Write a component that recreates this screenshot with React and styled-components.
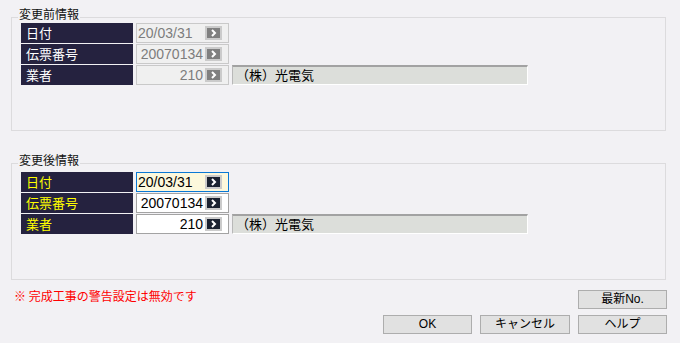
import styled, { createGlobalStyle } from "styled-components";

const Global = createGlobalStyle`
  html, body {
    margin: 0;
    background: #f2f1f4;
  }
  body {
    font-family: "Liberation Sans", "Noto Sans CJK JP", sans-serif;
  }
`;

const Page = styled.div`
  width: 680px;
  height: 343px;
  box-sizing: border-box;
  padding: 17px 14px 0 11px;
  display: flex;
  flex-direction: column;
`;

const Group = styled.div`
  box-sizing: border-box;
  height: ${(p) => p.$h}px;
  margin-bottom: ${(p) => p.$mb || 0}px;
  border: 1px solid #dcdbdd;
  display: flex;
  flex-direction: column;
  align-items: flex-start;
`;

const Title = styled.div`
  margin: -11px 0 0 6px;
  padding: 0 1px;
  background: #f2f1f4;
  font-family: "Noto Sans CJK JP", sans-serif;
  font-size: 12px;
  line-height: 14px;
  color: #111;
`;

const Rows = styled.div`
  margin: ${(p) => p.$top}px 0 0 9px;
  display: flex;
  flex-direction: column;
  gap: 1px;
`;

const Row = styled.div`
  display: flex;
  gap: 3px;
  height: 20px;
`;

const Label = styled.div`
  width: 112px;
  box-sizing: border-box;
  padding-left: 5px;
  background: #25223f;
  color: ${(p) => (p.$on ? "#ffff00" : "#ffffff")};
  font-family: "Noto Sans CJK JP", sans-serif;
  font-size: 13px;
  line-height: 20px;
`;

const fieldBorder = { off: "#c9c9c9", on: "#a3a3a3", focus: "#0a78d4" };
const fieldBg = { off: "#f0f0f0", on: "#ffffff", focus: "#fcf8dc" };

const Field = styled.div`
  width: 93px;
  box-sizing: border-box;
  border: 1px solid ${(p) => fieldBorder[p.$state]};
  background: ${(p) => fieldBg[p.$state]};
  display: flex;
  align-items: center;
  padding: 0 6px 0 1px;
`;

const Value = styled.span`
  flex: 1;
  text-align: ${(p) => (p.$left ? "left" : "right")};
  padding-right: 2px;
  font-size: 14px;
  line-height: 18px;
  color: ${(p) => (p.$state === "off" ? "#7d7d7d" : "#000")};
`;

const Pick = styled.span`
  width: 17px;
  height: 14px;
  box-sizing: border-box;
  border: 2px solid #cbcbcb;
  background: ${(p) => (p.$dark ? "#1b2231" : "#808080")};
  display: flex;
  align-items: center;
  justify-content: center;
`;

const Company = styled.div`
  width: 296px;
  box-sizing: border-box;
  height: 20px;
  border-top: 2px solid #a2a2a2;
  border-left: 1px solid #b8b8b8;
  border-right: 1px solid #ffffff;
  border-bottom: 1px solid #ffffff;
  background: #dcdeda;
  padding-left: 3px;
  font-family: "Noto Sans CJK JP", sans-serif;
  font-size: 13px;
  line-height: 16px;
  color: #000;
`;

const Footer = styled.div`
  display: flex;
  flex-direction: column;
  margin-right: -1px;
`;

const TopLine = styled.div`
  display: flex;
  justify-content: space-between;
  align-items: flex-start;
  margin-top: 10px;
`;

const Note = styled.div`
  margin: -1px 0 0 3px;
  font-family: "Noto Sans CJK JP", sans-serif;
  font-size: 12px;
  line-height: 14px;
  color: #ff0000;
`;

const Buttons = styled.div`
  display: flex;
  justify-content: flex-end;
  gap: 8px;
  margin-top: 6px;
`;

const Button = styled.button`
  width: ${(p) => p.$w || 89}px;
  height: 19px;
  box-sizing: border-box;
  border: 1px solid #adadad;
  background: #e1e1e1;
  padding: 0;
  font-family: "Liberation Sans", "Noto Sans CJK JP", sans-serif;
  font-size: 12px;
  line-height: 17px;
  color: #000;
`;

const Chevron = () => (
  <svg width="7" height="8" viewBox="0 0 7 8">
    <path d="M2 1 L5 4 L2 7" stroke="#fff" strokeWidth="2" fill="none" />
  </svg>
);

const FieldRow = ({ label, value, left, state, on, company }) => (
  <Row>
    <Label $on={on}>{label}</Label>
    <Field $state={state}>
      <Value $left={left} $state={state}>{value}</Value>
      <Pick $dark={state !== "off"}>
        <Chevron />
      </Pick>
    </Field>
    {company && <Company>{company}</Company>}
  </Row>
);

const App = () => (
  <Page>
    <Global />
    <Group $h={114} $mb={32}>
      <Title>変更前情報</Title>
      <Rows $top={2}>
        <FieldRow label="日付" value="20/03/31" left state="off" />
        <FieldRow label="伝票番号" value="20070134" state="off" />
        <FieldRow label="業者" value="210" state="off" company="（株）光電気" />
      </Rows>
    </Group>
    <Group $h={117}>
      <Title>変更後情報</Title>
      <Rows $top={5}>
        <FieldRow label="日付" value="20/03/31" left state="focus" on />
        <FieldRow label="伝票番号" value="20070134" state="on" on />
        <FieldRow label="業者" value="210" state="on" on company="（株）光電気" />
      </Rows>
    </Group>
    <Footer>
      <TopLine>
        <Note>※ 完成工事の警告設定は無効です</Note>
        <Button>最新No.</Button>
      </TopLine>
      <Buttons>
        <Button>OK</Button>
        <Button $w={90}>キャンセル</Button>
        <Button>ヘルプ</Button>
      </Buttons>
    </Footer>
  </Page>
);

export default App;
